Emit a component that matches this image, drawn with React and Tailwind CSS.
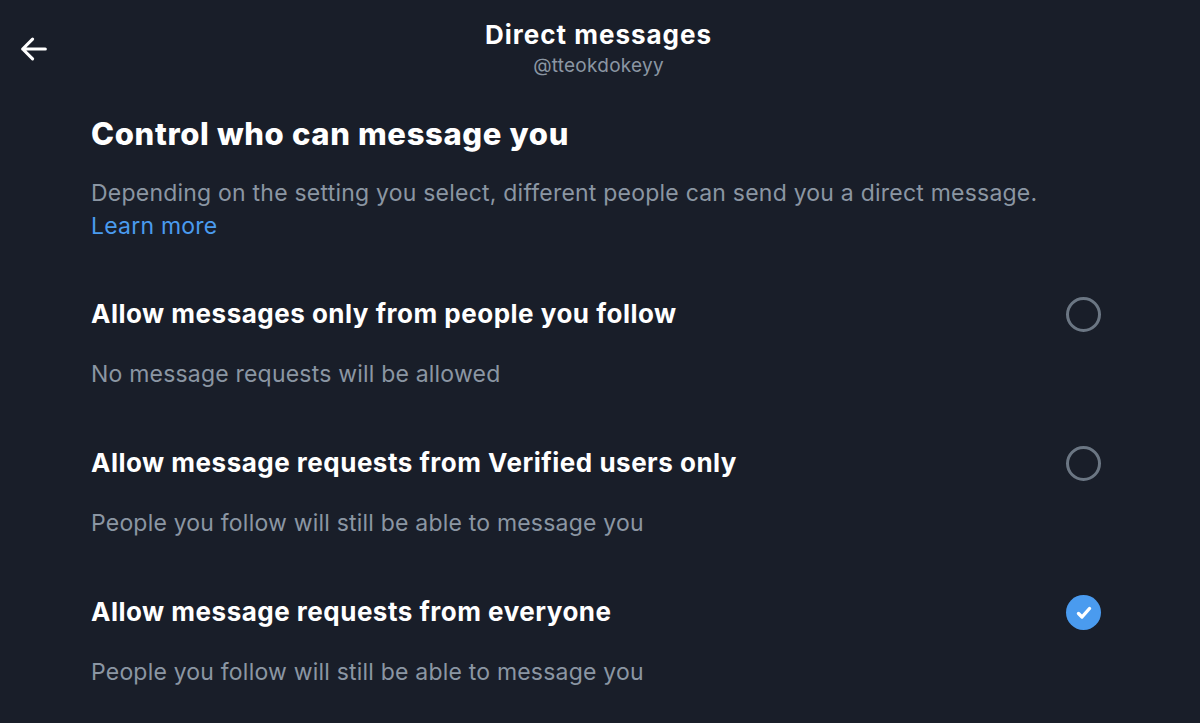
import React from 'react';

const options = [
  { id: 'follow', title: 'Allow messages only from people you follow', sub: 'No message requests will be allowed' },
  { id: 'verified', title: 'Allow message requests from Verified users only', sub: 'People you follow will still be able to message you' },
  { id: 'everyone', title: 'Allow message requests from everyone', sub: 'People you follow will still be able to message you' },
];

const Radio = ({ checked }) =>
  checked ? (
    <div className="w-[35px] h-[35px] rounded-full bg-[#4a9bef] flex items-center justify-center">
      <svg viewBox="0 0 24 24" className="w-[24px] h-[24px]" fill="none" stroke="white" strokeWidth="3.4" strokeLinecap="round" strokeLinejoin="round">
        <path d="M6.5 12.5l3.5 3.5 7.5-8.5" />
      </svg>
    </div>
  ) : (
    <div className="w-[35px] h-[35px] rounded-full border-[3px] border-[#6b7683]" />
  );

export default function App() {
  const selected = 'everyone';
  return (
    <div className="w-[1200px] h-[723px] overflow-hidden bg-[#191e29] text-white font-['Inter',sans-serif]">
      <div className="flex items-start h-[92px] pt-[18px]">
        <div className="w-[91px] pl-[17px] pt-[14px]">
          <svg viewBox="0 0 24 24" className="w-[34px] h-[34px]" fill="none" stroke="white" strokeWidth="2.2" strokeLinecap="round" strokeLinejoin="round">
            <path d="M20 12H4M11 5l-7 7 7 7" />
          </svg>
        </div>
        <div className="flex-1 flex flex-col items-center pr-[94px]">
          <div className="text-[26px] font-bold leading-[34px] tracking-[1px]">Direct messages</div>
          <div className="text-[19px] leading-[28px] tracking-[0.25px] text-[#8b96a3]">@tteokdokeyy</div>
        </div>
      </div>
      <div className="px-[91px]">
        <h1 className="text-[31px] font-extrabold leading-[40px] tracking-[0.65px] mt-[22px]">Control who can message you</h1>
        <p className="text-[23px] leading-[33px] tracking-[0.22px] text-[#8b96a3] mt-[23px]">
          Depending on the setting you select, different people can send you a direct message.
          <br />
          <span className="text-[#4a9bef]">Learn more</span>
        </p>
        <div className="mt-[53px] flex flex-col">
          {options.map((o) => (
            <div key={o.id} className="flex items-start justify-between h-[149px]">
              <div>
                <div className="text-[26px] font-bold leading-[36px] tracking-[0.5px]">{o.title}</div>
                <div className="text-[23px] leading-[30px] tracking-[0.2px] text-[#8b96a3] mt-[27px]">{o.sub}</div>
              </div>
              <div className="pt-[1px] mr-[8px]">
                <Radio checked={selected === o.id} />
              </div>
            </div>
          ))}
        </div>
      </div>
    </div>
  );
}
